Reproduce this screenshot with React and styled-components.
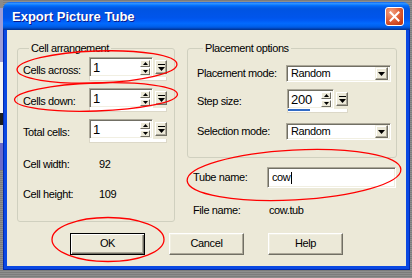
import React from "react";
import styled, { createGlobalStyle } from "styled-components";

const Global = createGlobalStyle`
  html, body { margin: 0; padding: 0; }
  body { background: #858585; font-family: "Liberation Sans", Arial, sans-serif; }
`;

const Desktop = styled.div`
  position: relative;
  width: 412px;
  height: 278px;
  display: flex;
  align-items: flex-start;
  overflow: hidden;
  background: repeating-linear-gradient(to bottom, #7c7c7c 0 1px, #8e8e8e 1px 2px);
`;

const EdgeStrip = styled.div`
  flex: none;
  width: 3px;
  height: 278px;
  background: linear-gradient(
    to bottom,
    #8a8a8a 0 8px,
    #9c9cd6 8px 62px,
    #f4f4f4 62px 113px,
    #1e1e1e 113px 125px,
    #dcdcdc 125px 143px,
    #6b6bc9 143px 170px,
    transparent 170px
  );
`;

const Window = styled.div`
  flex: none;
  margin-top: 2px;
  width: 407px;
  display: flex;
  flex-direction: column;
  border-radius: 7px 7px 0 0;
  overflow: hidden;
`;

const TitleBar = styled.div`
  height: 28px;
  box-sizing: border-box;
  display: flex;
  align-items: center;
  justify-content: space-between;
  padding: 0 6px 0 9px;
  background: linear-gradient(
    to bottom,
    #0058ee 0%, #3593ff 4%, #288eff 7%, #127dff 10%, #036ffc 13%,
    #0262ee 17%, #0057e5 23%, #0054e3 28%, #0055eb 56%, #005bf5 66%,
    #026afe 76%, #0062ef 86%, #0052d6 92%, #0040ab 96%, #003092 100%
  );
`;

const Title = styled.span`
  color: #fff;
  font-family: "Liberation Sans", Arial, sans-serif;
  font-weight: bold;
  font-size: 13px;
  line-height: 15px;
  text-shadow: 1px 1px #0a1a8c;
`;

const CloseButton = styled.div`
  width: 19px;
  height: 19px;
  box-sizing: border-box;
  border: 1px solid #fff;
  border-radius: 3px;
  display: flex;
  align-items: center;
  justify-content: center;
  background: radial-gradient(circle at 30% 25%, #f3a484 0%, #e2643c 45%, #c93f19 80%, #b8340f 100%);
`;

const Frame = styled.div`
  background: #0029b0;
  padding: 0 1px 1px;
`;

const Client = styled.div`
  height: 236px;
  box-sizing: border-box;
  border: 3px solid #0a48e2;
  border-top: 0;
  height: 239px;
  background: #ece9d8;
  padding: 11px 0 0 10px;
  display: flex;
  flex-direction: column;
  font-family: "Liberation Sans", Arial, sans-serif;
  font-size: 11px;
  line-height: 13px;
  letter-spacing: -0.4px;
  color: #000;
`;

const MainRow = styled.div`
  display: flex;
  align-items: flex-start;
  gap: 12px;
`;

const Group = styled.fieldset`
  margin: 0;
  width: ${(p) => p.$w}px;
  box-sizing: border-box;
  min-inline-size: 0;
  border: 1px solid #d0d0bf;
  border-radius: 3px;
  padding: ${(p) => p.$pad};
`;

const Legend = styled.legend`
  margin-left: 6px;
  padding: 0 2px;
  line-height: 15px;
  font-size: 11px;
`;

const RightColumn = styled.div`
  width: 210px;
  display: flex;
  flex-direction: column;
`;

const FormRow = styled.div`
  display: grid;
  grid-template-columns: ${(p) => p.$label}px auto;
  align-items: center;
  height: ${(p) => p.$h}px;
  margin-top: ${(p) => p.$mt || 0}px;
  padding-left: ${(p) => p.$indent || 0}px;
`;

const Label = styled.span`
  white-space: nowrap;
  padding-top: ${(p) => p.$nudge || 0}px;
`;

const Value = styled.span`
  white-space: nowrap;
`;

/* spin edit with slider popup */
const SpinControl = styled.div`
  width: ${(p) => p.$w}px;
  height: 24px;
  display: flex;
  flex-direction: column;
`;

const SpinTop = styled.div`
  height: 20px;
  display: flex;
  align-items: center;
`;

const Sunken = styled.div`
  box-sizing: border-box;
  border: 1px solid;
  border-color: #aca899 #fff #fff #aca899;
  box-shadow: inset 1px 1px #716f64, inset -1px -1px #f1efe2;
  background: #fff;
`;

const SpinEdit = styled(Sunken)`
  flex: 1;
  height: 20px;
  display: flex;
  align-items: center;
  padding: 0 2px 0 3px;
`;

const SpinValue = styled.span`
  flex: 1;
  font-size: 13px;
  line-height: 15px;
  letter-spacing: -0.2px;
  padding-top: 1px;
`;

const Spinner = styled.div`
  width: 10px;
  display: flex;
  flex-direction: column;
  gap: 1px;
`;

const TinyButton = styled.div`
  height: ${(p) => p.$h}px;
  width: ${(p) => p.$w}px;
  box-sizing: border-box;
  border: 1px solid;
  border-color: #fff #716f64 #716f64 #fff;
  background: #ece9d8;
  display: flex;
  align-items: center;
  justify-content: center;
  flex: none;
`;

const MenuButton = styled(TinyButton)`
  margin-left: 2px;
  box-shadow: inset -1px -1px #aca899;
`;

const Track = styled.div`
  height: 4px;
  box-sizing: border-box;
  border: 1px solid #dcd8c8;
  border-top: 0;
  background: #fff;
  display: flex;
`;

const TrackFill = styled.div`
  height: 2px;
  background: #316ac5;
`;

/* combo */
const Combo = styled(Sunken)`
  width: 105px;
  height: 17px;
  display: flex;
  align-items: center;
  padding: 2px;
`;

const ComboText = styled.span`
  flex: 1;
  padding-left: 2px;
`;

const DropButton = styled.div`
  width: 13px;
  height: 13px;
  box-sizing: border-box;
  border: 1px solid;
  border-color: #f1efe2 #716f64 #716f64 #f1efe2;
  box-shadow: inset -1px -1px #aca899, inset 1px 1px #fff;
  background: #ece9d8;
  display: flex;
  align-items: center;
  justify-content: center;
`;

const TextInput = styled(Sunken)`
  width: 129px;
  height: 21px;
  display: flex;
  align-items: center;
  padding: 0 4px;
`;

const Caret = styled.span`
  width: 1px;
  height: 12px;
  background: #000;
  margin-left: 1px;
`;

const ButtonRow = styled.div`
  display: flex;
  gap: 24px;
  margin-top: 11px;
  margin-left: 53px;
`;

const PushButton = styled.div`
  width: 75px;
  height: 22px;
  box-sizing: border-box;
  background: #ece9d8;
  border: 1px solid;
  border-color: ${(p) => (p.$default ? "#000" : "#fff #716f64 #716f64 #fff")};
  box-shadow: ${(p) =>
    p.$default
      ? "inset 1px 1px #fff, inset -1px -1px #716f64, inset -2px -2px #aca899"
      : "inset -1px -1px #aca899, inset 1px 1px #f1efe2"};
  display: flex;
  align-items: center;
  justify-content: center;
  padding-bottom: 1px;
`;

const Overlay = styled.svg`
  position: absolute;
  left: 0;
  top: 0;
  pointer-events: none;
`;

const UpArrow = () => (
  <svg width="5" height="3" viewBox="0 0 5 3">
    <path d="M2.5 0 L5 3 L0 3 Z" fill="#000" />
  </svg>
);
const DownArrow = () => (
  <svg width="5" height="3" viewBox="0 0 5 3">
    <path d="M0 0 L5 0 L2.5 3 Z" fill="#000" />
  </svg>
);
const MenuGlyph = () => (
  <svg width="7" height="7" viewBox="0 0 7 7">
    <rect x="0" y="0" width="7" height="1" fill="#000" />
    <path d="M0 3 L7 3 L3.5 7 Z" fill="#000" />
  </svg>
);
const ComboArrow = () => (
  <svg width="7" height="4" viewBox="0 0 7 4">
    <path d="M0 0 L7 0 L3.5 4 Z" fill="#000" />
  </svg>
);

function Spin({ w, value, fill }) {
  return (
    <SpinControl $w={w}>
      <SpinTop>
        <SpinEdit>
          <SpinValue>{value}</SpinValue>
          <Spinner>
            <TinyButton $w={10} $h={7}>
              <UpArrow />
            </TinyButton>
            <TinyButton $w={10} $h={7}>
              <DownArrow />
            </TinyButton>
          </Spinner>
        </SpinEdit>
        <MenuButton $w={12} $h={14}>
          <MenuGlyph />
        </MenuButton>
      </SpinTop>
      <Track>{fill > 0 && <TrackFill style={{ width: `${fill * 100}%` }} />}</Track>
    </SpinControl>
  );
}

function ComboBox({ value }) {
  return (
    <Combo>
      <ComboText>{value}</ComboText>
      <DropButton>
        <ComboArrow />
      </DropButton>
    </Combo>
  );
}

export default function App() {
  return (
    <>
      <Global />
      <Desktop>
        <EdgeStrip />
        <Window>
          <TitleBar>
            <Title>Export Picture Tube</Title>
            <CloseButton>
              <svg width="11" height="11" viewBox="0 0 11 11">
                <path d="M1.5 1.5 L9.5 9.5 M9.5 1.5 L1.5 9.5" stroke="#fff" strokeWidth="2" strokeLinecap="square" />
              </svg>
            </CloseButton>
          </TitleBar>
          <Frame>
            <Client>
              <MainRow>
                <Group $w={158} $pad="1px 0 20px 5px">
                  <Legend>Cell arrangement</Legend>
                  <FormRow $label={66} $h={24}>
                    <Label $nudge={3}>Cells across:</Label>
                    <Spin w={78} value="1" fill={0} />
                  </FormRow>
                  <FormRow $label={66} $h={24} $mt={7}>
                    <Label $nudge={3}>Cells down:</Label>
                    <Spin w={78} value="1" fill={0} />
                  </FormRow>
                  <FormRow $label={66} $h={24} $mt={7}>
                    <Label $nudge={3}>Total cells:</Label>
                    <Spin w={78} value="1" fill={0} />
                  </FormRow>
                  <FormRow $label={76} $h={13} $mt={15}>
                    <Label>Cell width:</Label>
                    <Value>92</Value>
                  </FormRow>
                  <FormRow $label={76} $h={13} $mt={17}>
                    <Label>Cell height:</Label>
                    <Value>109</Value>
                  </FormRow>
                </Group>
                <RightColumn>
                  <Group $w={210} $pad="9px 0 17px 9px">
                    <Legend>Placement options</Legend>
                    <FormRow $label={89} $h={17}>
                      <Label>Placement mode:</Label>
                      <ComboBox value="Random" />
                    </FormRow>
                    <FormRow $label={90} $h={24} $mt={7}>
                      <Label>Step size:</Label>
                      <Spin w={61} value="200" fill={0.38} />
                    </FormRow>
                    <FormRow $label={89} $h={17} $mt={10}>
                      <Label>Selection mode:</Label>
                      <ComboBox value="Random" />
                    </FormRow>
                  </Group>
                  <FormRow $label={74} $h={21} $mt={9} $indent={6}>
                    <Label>Tube name:</Label>
                    <TextInput>
                      <span>cow</span>
                      <Caret />
                    </TextInput>
                  </FormRow>
                  <FormRow $label={76} $h={13} $mt={16} $indent={6}>
                    <Label>File name:</Label>
                    <Value>cow.tub</Value>
                  </FormRow>
                </RightColumn>
              </MainRow>
              <ButtonRow>
                <PushButton $default>OK</PushButton>
                <PushButton>Cancel</PushButton>
                <PushButton>Help</PushButton>
              </ButtonRow>
            </Client>
          </Frame>
        </Window>
        <Overlay width="412" height="278" viewBox="0 0 412 278">
          <g fill="none" stroke="#ff0000" strokeWidth="1.3">
            <ellipse cx="97" cy="67" rx="80" ry="16" transform="rotate(-2 97 67)" />
            <ellipse cx="96" cy="97" rx="81.5" ry="14" transform="rotate(-2 96 97)" />
            <ellipse cx="294" cy="175" rx="107" ry="25" transform="rotate(-3 294 175)" />
            <ellipse cx="108" cy="239.5" rx="56" ry="22" />
          </g>
        </Overlay>
      </Desktop>
    </>
  );
}
